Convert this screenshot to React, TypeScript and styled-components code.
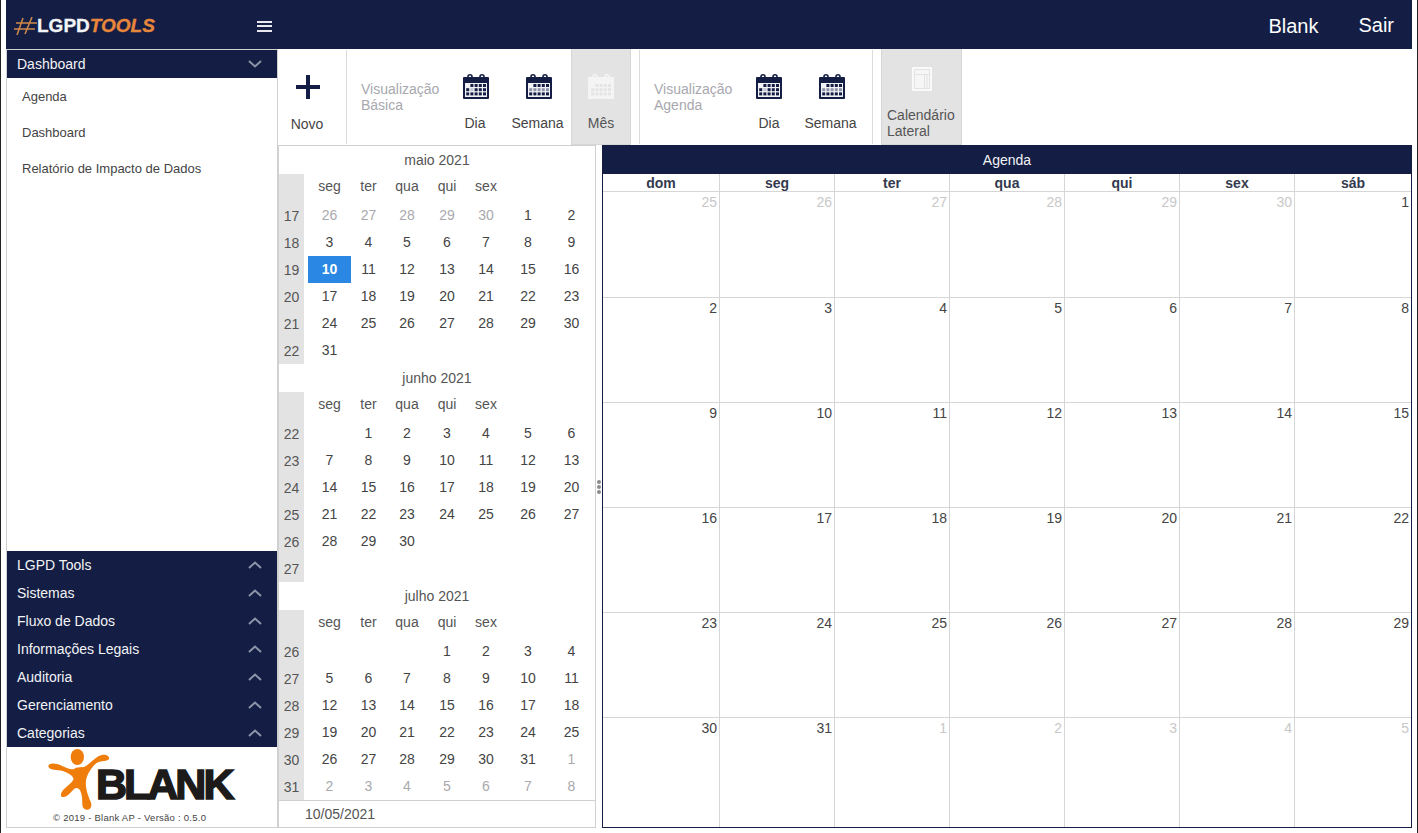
import React from "react";
import styled, { createGlobalStyle } from "styled-components";

const NAVY = "#141e44";
const GREY_LINE = "#d0d0d0";
const TEXT = "#444";

const Global = createGlobalStyle`
  html, body { margin: 0; padding: 0; background: #fff; }
  body { font-family: "Liberation Sans", Arial, sans-serif; font-size: 14px; color: ${TEXT}; overflow: hidden; }
  * { box-sizing: border-box; }
`;

const Frame = styled.div`
  width: 1418px;
  height: 833px;
  padding: 0 5px 5px 5px;
  border-left: 1px solid #222;
  border-right: 1px solid #222;
  display: flex;
  flex-direction: column;
  overflow: hidden;
`;

const TopBar = styled.header`
  height: 49px;
  flex: none;
  background: ${NAVY};
  display: flex;
  align-items: center;
  color: #fff;
  padding: 2px 18px 0 8px;
`;
const LogoArea = styled.div`
  width: 243px;
  display: flex;
  align-items: center;
  font-size: 19px;
  font-weight: 700;
  margin-top: 1px;
  -webkit-text-stroke: 0.3px currentColor;
`;
const LogoWhite = styled.span`
  color: #f3f4f6;
`;
const LogoOrange = styled.span`
  color: #e8873c;
  font-style: italic;
`;
const Burger = styled.button`
  width: 15px;
  height: 11px;
  margin-top: 1px;
  border: 0;
  padding: 0;
  background: none;
  display: flex;
  flex-direction: column;
  justify-content: space-between;
  & > i { display: block; height: 2px; background: #e8e8ee; }
`;
const TopRight = styled.div`
  margin-left: auto;
  margin-top: 2px;
  display: flex;
  gap: 40px;
  font-size: 20px;
  color: #fff;
`;
const TopLink = styled.span<{ $up?: boolean }>`
  margin-top: ${(p) => (p.$up ? "-1px" : "0")};
`;

const Body = styled.div`
  flex: 1;
  display: flex;
  min-height: 0;
`;

const Sidebar = styled.aside`
  width: 272px;
  flex: none;
  border: 1px solid ${GREY_LINE};
  display: flex;
  flex-direction: column;
`;
const AccordionHead = styled.div`
  height: 28px;
  flex: none;
  background: ${NAVY};
  color: #f2f3f6;
  font-size: 14px;
  display: flex;
  align-items: center;
  justify-content: space-between;
  padding: 0 15px 0 10px;
`;
const MenuItem = styled.div`
  height: 36px;
  line-height: 37px;
  padding-left: 15px;
  font-size: 13px;
  color: #444;
`;
const Spacer = styled.div`
  flex: 1;
`;
const BrandBox = styled.div`
  height: 80px;
  flex: none;
  display: flex;
  flex-direction: column;
  align-items: flex-start;
`;
const BrandRow = styled.div`
  height: 66px;
  display: flex;
  align-items: flex-start;
  margin-left: 33px;
`;
const BrandWord = styled.span`
  font-size: 43px;
  font-weight: 700;
  line-height: 43px;
  letter-spacing: -3px;
  color: #1d1b1a;
  -webkit-text-stroke: 1.6px #1d1b1a;
  margin: 16px 0 0 -14px;
`;
const Copyright = styled.div`
  font-size: 9.5px;
  line-height: 10px;
  color: #444;
  margin-left: 46px;
  letter-spacing: 0.25px;
`;

const Main = styled.main`
  flex: 1;
  min-width: 0;
  display: flex;
  flex-direction: column;
`;
const Toolbar = styled.div`
  height: 96px;
  flex: none;
  display: flex;
`;
const ToolButton = styled.div<{ $w: number; $active?: boolean }>`
  width: ${(p) => p.$w}px;
  flex: none;
  height: 96px;
  display: flex;
  flex-direction: column;
  align-items: center;
  padding-top: 25px;
  background: ${(p) => (p.$active ? "#e3e3e3" : "transparent")};
  border: 1px solid ${(p) => (p.$active ? "#d6d6d6" : "transparent")};
  border-width: ${(p) => (p.$active ? "0 1px 1px 1px" : "0")};
  color: ${(p) => (p.$active ? "#555" : TEXT)};
`;
const ToolLabel = styled.span<{ $nudge?: boolean }>`
  font-size: 14px;
  line-height: 16px;
  margin-top: 16px;
  margin-right: ${(p) => (p.$nudge ? "2px" : "0")};
  white-space: nowrap;
`;
const WideToolButton = styled.div`
  width: 81px;
  flex: none;
  height: 96px;
  display: flex;
  flex-direction: column;
  padding: 18px 0 0 5px;
  background: #e3e3e3;
  border: 1px solid #d6d6d6;
  border-top: 0;
  color: #555;
  line-height: 16px;
  & > svg { align-self: center; margin-left: -5px; margin-bottom: 16px; }
`;
const Separator = styled.div<{ $gapL: number; $gapR: number }>`
  width: 1px;
  height: 94px;
  margin: 1px ${(p) => p.$gapR}px 0 ${(p) => p.$gapL}px;
  background: #dcdcdc;
  flex: none;
`;
const GroupLabel = styled.div`
  width: 85px;
  flex: none;
  padding-top: 32px;
  font-size: 14px;
  line-height: 16px;
  color: #a8a8ae;
`;

const Content = styled.div`
  flex: 1;
  display: flex;
  min-height: 0;
`;
const NavPanel = styled.section`
  width: 318px;
  flex: none;
  border: 1px solid ${GREY_LINE};
  display: flex;
  flex-direction: column;
`;
const MonthBox = styled.div`
  height: 218px;
  flex: none;
`;
const MonthTitle = styled.div`
  height: 28px;
  line-height: 29px;
  text-align: center;
  color: #555;
`;
const WeekRow = styled.div<{ $h?: number }>`
  display: flex;
  height: ${(p) => p.$h ?? 27}px;
`;
const WeekNo = styled.div`
  width: 25px;
  flex: none;
  background: #e3e3e3;
  text-align: center;
  line-height: 28px;
  color: #555;
`;
const DayGrid = styled.div`
  margin-left: 4px;
  flex: none;
  display: grid;
  grid-template-columns: 43px 35px 42px 38px 40px 44px 43px;
`;
const DowCell = styled.div`
  text-align: center;
  line-height: 25px;
  color: #555;
`;
const DayCell = styled.div<{ $muted?: boolean; $sel?: boolean }>`
  text-align: center;
  line-height: 27px;
  font-weight: ${(p) => (p.$sel ? 700 : 400)};
  background: ${(p) => (p.$sel ? "#2a88e4" : "transparent")};
  color: ${(p) => (p.$sel ? "#fff" : p.$muted ? "#a9a9ad" : "#444")};
`;
const DateFoot = styled.div`
  flex: 1;
  border-top: 1px solid ${GREY_LINE};
  padding-left: 26px;
  line-height: 27px;
  color: #555;
`;

const Splitter = styled.div`
  width: 6px;
  flex: none;
  display: flex;
  flex-direction: column;
  align-items: center;
  justify-content: center;
  gap: 1px;
  & > i { width: 4px; height: 4px; border-radius: 50%; background: #8b8b8b; }
`;

const Agenda = styled.section`
  flex: 1;
  min-width: 0;
  border: 1px solid ${NAVY};
  border-top: 0;
  display: flex;
  flex-direction: column;
`;
const AgendaTitle = styled.div`
  height: 29px;
  flex: none;
  background: ${NAVY};
  margin: 0 -1px;
  color: #f2f3f6;
  text-align: center;
  line-height: 30px;
  font-size: 14px;
`;
const AGENDA_COLS = "117px repeat(5, 115px) 1fr";
const DowRow = styled.div`
  height: 18px;
  flex: none;
  display: grid;
  grid-template-columns: ${AGENDA_COLS};
  border-bottom: 1px solid #d6d6d6;
`;
const DowHead = styled.div`
  text-align: center;
  font-weight: 700;
  font-size: 14px;
  line-height: 18px;
  color: #333a4e;
  border-right: 1px solid #d6d6d6;
  &:last-child { border-right: 0; }
`;
const AgendaGrid = styled.div`
  flex: 1;
  display: grid;
  grid-template-columns: ${AGENDA_COLS};
  grid-template-rows: 106px repeat(4, 105px) 1fr;
`;
const AgendaCell = styled.div<{ $muted?: boolean; $last?: boolean; $lastRow?: boolean }>`
  text-align: right;
  padding: 1px 2px 0 0;
  line-height: 18px;
  font-size: 14px;
  color: ${(p) => (p.$muted ? "#c8c8c8" : "#444")};
  border-right: ${(p) => (p.$last ? "0" : "1px solid #d6d6d6")};
  border-bottom: ${(p) => (p.$lastRow ? "0" : "1px solid #d6d6d6")};
`;

const Chevron = ({ up }: { up?: boolean }) => (
  <svg width="14" height="8" viewBox="0 0 14 8" fill="none" stroke="#8e94a8" strokeWidth="2">
    <polyline points={up ? "1,7 7,1.5 13,7" : "1,1 7,6.5 13,1"} />
  </svg>
);

const HashMark = () => (
  <svg width="23" height="18" viewBox="0 0 23 18" fill="none" stroke="#d08a48" strokeWidth="1.5">
    <line x1="9" y1="1" x2="3" y2="18" />
    <line x1="18" y1="0" x2="11" y2="17" />
    <line x1="2" y1="6" x2="23" y2="6" />
    <line x1="0" y1="12" x2="21" y2="12" />
  </svg>
);

const PlusIcon = () => (
  <svg width="26" height="26" viewBox="0 0 26 26" fill={NAVY}>
    <rect x="1" y="11" width="24" height="4" />
    <rect x="11" y="1" width="4" height="24" />
  </svg>
);

const CalIcon = ({ light, mode }: { light?: boolean; mode: "day" | "week" | "month" }) => {
  const body = light ? "#f4f4f4" : NAVY;
  const inner = light ? "#f4f4f4" : "#f2f3f6";
  const cell = (c: number, r: number) => {
    if (light) return "#e4e4e4";
    if (mode === "day") return r === 1 && c === 1 ? "#bfc3cf" : NAVY;
    if (mode === "week") return r === 1 ? "#8d94aa" : NAVY;
    return NAVY;
  };
  const cols = [0, 1, 2, 3, 4];
  const rows = [0, 1, 2];
  return (
    <svg width="26" height="25" viewBox="0 0 26 25">
      <rect x="0" y="3" width="26" height="22" rx="1" fill={body} />
      <rect x="5" y="0.8" width="4" height="6" rx="2" fill="none" stroke={body} strokeWidth="1.6" />
      <rect x="17" y="0.8" width="4" height="6" rx="2" fill="none" stroke={body} strokeWidth="1.6" />
      <rect x="2" y="9" width="22" height="14" fill={inner} />
      {rows.map((r) =>
        cols.map((c) =>
          r === 0 && c < 1 ? null : (
            <rect key={`${r}${c}`} x={3.2 + c * 4.2} y={10 + r * 4.2} width="3" height="3" fill={cell(c, r)} />
          )
        )
      )}
    </svg>
  );
};

const SideIcon = () => (
  <svg width="20" height="24" viewBox="0 0 20 24">
    <rect x="0" y="0" width="20" height="24" fill="#f9f9f9" />
    <rect x="2" y="2" width="16" height="20" fill="#e3e3e3" />
    <rect x="3" y="3" width="14" height="4" fill="#f6f6f6" />
    <rect x="3" y="8" width="9" height="13" fill="#f6f6f6" />
    <rect x="13" y="8" width="1.5" height="13" fill="#f6f6f6" />
    <rect x="15.5" y="8" width="1.5" height="13" fill="#f6f6f6" />
  </svg>
);

const BrandFigure = () => (
  <svg width="70" height="65" viewBox="0 0 210 195">
    <ellipse cx="112" cy="30" rx="20" ry="24" fill="#ef7d0c" />
    <path
      fill="#ef7d0c"
      d="M125 60 C135 65 150 45 175 28 C190 18 210 25 207 35 C203 45 185 38 170 48 C155 60 142 80 138 100 C135 125 145 145 150 160 C160 178 150 192 135 187 C122 180 130 160 124 140 C120 125 112 118 100 128 C90 138 82 148 72 150 C60 152 60 140 70 128 C80 118 95 108 100 98 C103 88 85 78 68 72 C52 67 28 72 25 58 C25 46 48 48 62 55 C78 63 95 72 108 62 Z"
    />
  </svg>
);

type Day = { d: number | ""; m?: boolean; sel?: boolean };
type Month = { title: string; weeks: { no: number; days: Day[] }[] };

const seq = (a: number, b: number, m?: boolean): Day[] => {
  const out: Day[] = [];
  for (let i = a; i <= b; i++) out.push({ d: i, m });
  return out;
};
const blanks = (n: number): Day[] => Array.from({ length: n }, () => ({ d: "" as const }));

const months: Month[] = [
  {
    title: "maio 2021",
    weeks: [
      { no: 17, days: [...seq(26, 30, true), ...seq(1, 2)] },
      { no: 18, days: seq(3, 9) },
      { no: 19, days: [{ d: 10, sel: true }, ...seq(11, 16)] },
      { no: 20, days: seq(17, 23) },
      { no: 21, days: seq(24, 30) },
      { no: 22, days: [{ d: 31 }, ...blanks(6)] },
    ],
  },
  {
    title: "junho 2021",
    weeks: [
      { no: 22, days: [...blanks(1), ...seq(1, 6)] },
      { no: 23, days: seq(7, 13) },
      { no: 24, days: seq(14, 20) },
      { no: 25, days: seq(21, 27) },
      { no: 26, days: [...seq(28, 30), ...blanks(4)] },
      { no: 27, days: blanks(7) },
    ],
  },
  {
    title: "julho 2021",
    weeks: [
      { no: 26, days: [...blanks(3), ...seq(1, 4)] },
      { no: 27, days: seq(5, 11) },
      { no: 28, days: seq(12, 18) },
      { no: 29, days: seq(19, 25) },
      { no: 30, days: [...seq(26, 31), { d: 1, m: true }] },
      { no: 31, days: seq(2, 8, true) },
    ],
  },
];

const miniDow = ["seg", "ter", "qua", "qui", "sex", "", ""];
const agendaDow = ["dom", "seg", "ter", "qua", "qui", "sex", "sáb"];
const agendaDays: Day[] = [
  ...seq(25, 30, true),
  { d: 1 },
  ...seq(2, 31),
  ...seq(1, 5, true),
];
const bottomMenu = ["LGPD Tools", "Sistemas", "Fluxo de Dados", "Informações Legais", "Auditoria", "Gerenciamento", "Categorias"];

export default function App() {
  return (
    <Frame>
      <Global />
      <TopBar>
        <LogoArea>
          <HashMark />
          <LogoWhite>LGPD</LogoWhite>
          <LogoOrange>TOOLS</LogoOrange>
        </LogoArea>
        <Burger aria-label="menu">
          <i />
          <i />
          <i />
        </Burger>
        <TopRight>
          <TopLink>Blank</TopLink>
          <TopLink $up>Sair</TopLink>
        </TopRight>
      </TopBar>
      <Body>
        <Sidebar>
          <AccordionHead>
            Dashboard
            <Chevron />
          </AccordionHead>
          <MenuItem>Agenda</MenuItem>
          <MenuItem>Dashboard</MenuItem>
          <MenuItem>Relatório de Impacto de Dados</MenuItem>
          <Spacer />
          {bottomMenu.map((m) => (
            <AccordionHead key={m}>
              {m}
              <Chevron up />
            </AccordionHead>
          ))}
          <BrandBox>
            <BrandRow>
              <BrandFigure />
              <BrandWord>BLANK</BrandWord>
            </BrandRow>
            <Copyright>© 2019 - Blank AP - Versão : 0.5.0</Copyright>
          </BrandBox>
        </Sidebar>
        <Main>
          <Toolbar>
            <ToolButton $w={60}>
              <PlusIcon />
              <ToolLabel $nudge>Novo</ToolLabel>
            </ToolButton>
            <Separator $gapL={8} $gapR={14} />
            <GroupLabel>
              Visualização
              <br />
              Básica
            </GroupLabel>
            <ToolButton $w={60}>
              <CalIcon mode="day" />
              <ToolLabel $nudge>Dia</ToolLabel>
            </ToolButton>
            <ToolButton $w={65}>
              <CalIcon mode="week" />
              <ToolLabel $nudge>Semana</ToolLabel>
            </ToolButton>
            <ToolButton $w={60} $active>
              <CalIcon mode="month" light />
              <ToolLabel>Mês</ToolLabel>
            </ToolButton>
            <Separator $gapL={8} $gapR={14} />
            <GroupLabel>
              Visualização
              <br />
              Agenda
            </GroupLabel>
            <ToolButton $w={60}>
              <CalIcon mode="day" />
              <ToolLabel>Dia</ToolLabel>
            </ToolButton>
            <ToolButton $w={65}>
              <CalIcon mode="week" />
              <ToolLabel $nudge>Semana</ToolLabel>
            </ToolButton>
            <Separator $gapL={8} $gapR={8} />
            <WideToolButton>
              <SideIcon />
              <span>
                Calendário
                <br />
                Lateral
              </span>
            </WideToolButton>
          </Toolbar>
          <Content>
            <NavPanel>
              {months.map((mo) => (
                <MonthBox key={mo.title}>
                  <MonthTitle>{mo.title}</MonthTitle>
                  <WeekRow $h={28}>
                    <WeekNo />
                    <DayGrid>
                      {miniDow.map((d, i) => (
                        <DowCell key={i}>{d}</DowCell>
                      ))}
                    </DayGrid>
                  </WeekRow>
                  {mo.weeks.map((w) => (
                    <WeekRow key={w.no}>
                      <WeekNo>{w.no}</WeekNo>
                      <DayGrid>
                        {w.days.map((d, i) => (
                          <DayCell key={i} $muted={d.m} $sel={d.sel}>
                            {d.d}
                          </DayCell>
                        ))}
                      </DayGrid>
                    </WeekRow>
                  ))}
                </MonthBox>
              ))}
              <DateFoot>10/05/2021</DateFoot>
            </NavPanel>
            <Splitter>
              <i />
              <i />
              <i />
            </Splitter>
            <Agenda>
              <AgendaTitle>Agenda</AgendaTitle>
              <DowRow>
                {agendaDow.map((d) => (
                  <DowHead key={d}>{d}</DowHead>
                ))}
              </DowRow>
              <AgendaGrid>
                {agendaDays.map((d, i) => (
                  <AgendaCell key={i} $muted={d.m} $last={i % 7 === 6} $lastRow={i >= 35}>
                    {d.d}
                  </AgendaCell>
                ))}
              </AgendaGrid>
            </Agenda>
          </Content>
        </Main>
      </Body>
    </Frame>
  );
}
